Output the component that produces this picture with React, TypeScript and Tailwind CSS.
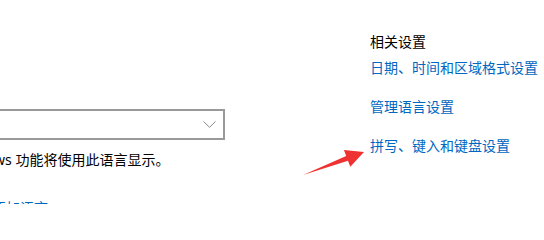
import React from 'react';

const relatedLinks = ['日期、时间和区域格式设置', '管理语言设置', '拼写、键入和键盘设置'];

const App: React.FC = () => {
  return (
    <div className="relative h-[204px] w-[544px] overflow-hidden bg-white text-[14px] leading-5 text-black font-['Noto_Sans','Noto_Sans_CJK_SC',sans-serif]">
      <div className="flex">
        {/* left: display language */}
        <div className="-ml-[48px] w-[273px] shrink-0 pt-[109px]">
          <div className="flex h-[31px] items-center justify-end border-2 border-[#999999] pr-[7px]">
            <svg className="h-[7px] w-[13px]" viewBox="0 0 13 7" fill="none">
              <path d="M0.5 0.5 L6.5 6.3 L12.5 0.5" stroke="#8a8a8a" strokeWidth="1" />
            </svg>
          </div>
          <p className="mt-[10px] whitespace-nowrap">Windows 功能将使用此语言显示。</p>
          <p className="mt-[28px] ml-[40px] whitespace-nowrap text-[#0067c0]">添加语言</p>
        </div>

        {/* right: related settings */}
        <div className="ml-[145px] pt-[32px]">
          <h3 className="whitespace-nowrap">相关设置</h3>
          <ul className="mt-[6px] flex flex-col gap-[19px]">
            {relatedLinks.map((link) => (
              <li key={link} className="whitespace-nowrap text-[#0067c0]">
                {link}
              </li>
            ))}
          </ul>
        </div>
      </div>

      {/* red annotation arrow */}
      <svg className="absolute left-[300px] top-[145px] h-[34px] w-[68px]" viewBox="0 0 68 34">
        <polygon points="3,30 46.2,11.1 43.9,5 64,7 50.3,21.8 48,15.7" fill="#ee3131" />
      </svg>
    </div>
  );
};

export default App;
